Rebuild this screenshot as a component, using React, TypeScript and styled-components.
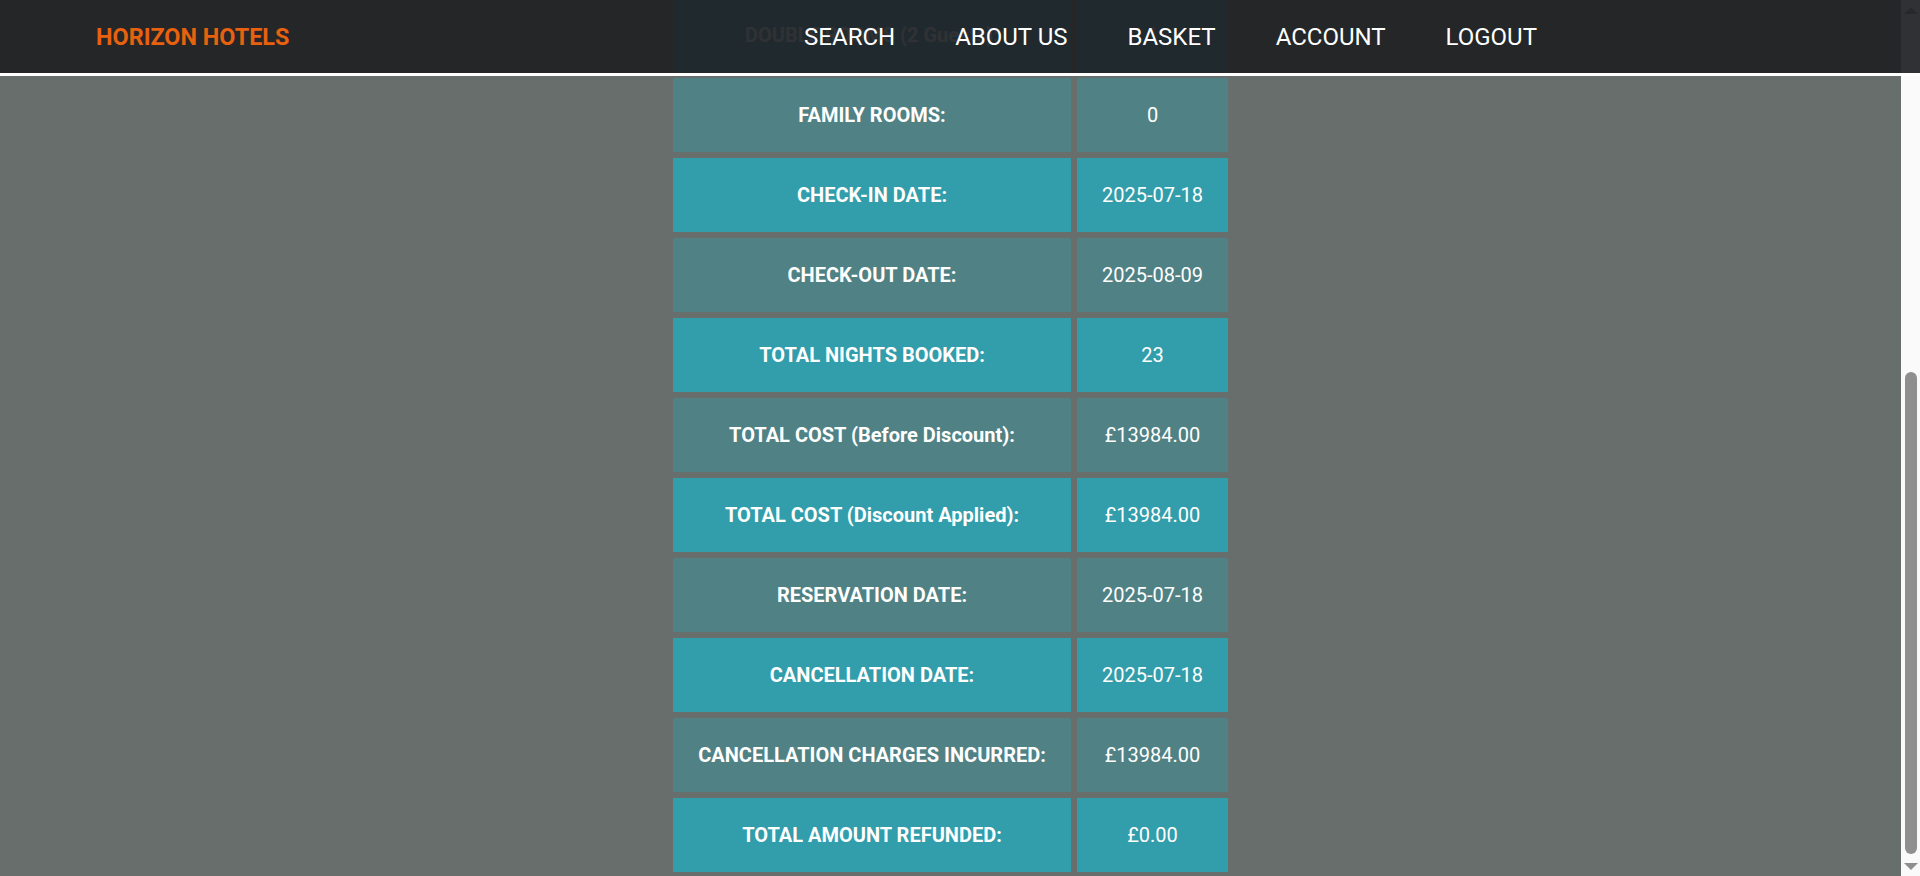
import React, { useLayoutEffect, useRef, useState } from 'react';
import styled, { createGlobalStyle } from 'styled-components';

const GlobalStyle = createGlobalStyle`
  html, body {
    margin: 0;
    padding: 0;
    height: 100%;
    overflow: hidden;
  }
  body {
    font-family: Roboto, 'Liberation Sans', sans-serif;
    background: #676e6b;
  }
`;

type Detail = { label: string; value: string };

// booking summary shown after a cancellation
const details: Detail[] = [
  { label: 'BOOKING ID:', value: '10482' },
  { label: 'HOTEL:', value: 'London' },
  { label: 'GUEST NAME:', value: 'J. Smith' },
  { label: 'BOOKING STATUS:', value: 'Cancelled' },
  { label: 'PAYMENT METHOD:', value: 'Card' },
  { label: 'STANDARD ROOMS (1 Guest):', value: '0' },
  { label: 'DOUBLE ROOMS (2 Guests):', value: '1' },
  { label: 'FAMILY ROOMS:', value: '0' },
  { label: 'CHECK-IN DATE:', value: '2025-07-18' },
  { label: 'CHECK-OUT DATE:', value: '2025-08-09' },
  { label: 'TOTAL NIGHTS BOOKED:', value: '23' },
  { label: 'TOTAL COST (Before Discount):', value: '£13984.00' },
  { label: 'TOTAL COST (Discount Applied):', value: '£13984.00' },
  { label: 'RESERVATION DATE:', value: '2025-07-18' },
  { label: 'CANCELLATION DATE:', value: '2025-07-18' },
  { label: 'CANCELLATION CHARGES INCURRED:', value: '£13984.00' },
  { label: 'TOTAL AMOUNT REFUNDED:', value: '£0.00' },
];

const navItems = ['SEARCH', 'ABOUT US', 'BASKET', 'ACCOUNT', 'LOGOUT'];

const App: React.FC = () => {
  const scrollRef = useRef<HTMLDivElement>(null);
  const laneRef = useRef<HTMLDivElement>(null);
  const [thumb, setThumb] = useState({ height: 0, top: 0 });

  // jump to the end of the summary and keep the drawn scrollbar in sync
  useLayoutEffect(() => {
    const el = scrollRef.current;
    const lane = laneRef.current;
    if (!el || !lane) return;

    const update = () => {
      const max = el.scrollHeight - el.clientHeight;
      const length = lane.clientHeight - 3;
      const height = (length * el.clientHeight) / el.scrollHeight;
      const top = max > 0 ? ((length - height) * el.scrollTop) / max : 0;
      setThumb({ height, top });
    };

    el.scrollTop = el.scrollHeight;
    update();
    el.addEventListener('scroll', update);
    return () => el.removeEventListener('scroll', update);
  }, []);

  return (
    <>
      <GlobalStyle />
      <Page>
        <Header>
          <Logo href="#">HORIZON HOTELS</Logo>
          <Nav>
            {navItems.map((item) => (
              <NavLink key={item} href="#">
                {item}
              </NavLink>
            ))}
          </Nav>
        </Header>

        <ScrollArea ref={scrollRef}>
          <Content>
            <Title>BOOKING CANCELLED</Title>
            <DetailsList>
              {details.map((d, i) => (
                <Row key={d.label}>
                  <Cell $tone={i % 2 === 0 ? 'bright' : 'dark'} $label>
                    {d.label}
                  </Cell>
                  <Cell $tone={i % 2 === 0 ? 'bright' : 'dark'}>{d.value}</Cell>
                </Row>
              ))}
            </DetailsList>
          </Content>
        </ScrollArea>

        <ScrollTrack>
          <ArrowButton $height={17} $pad={7}>
            <Arrow $dir="up" />
          </ArrowButton>
          <ThumbLane ref={laneRef}>
            <Thumb style={{ height: thumb.height, marginTop: thumb.top }} />
          </ThumbLane>
          <ArrowButton $height={19} $pad={6}>
            <Arrow $dir="down" />
          </ArrowButton>
        </ScrollTrack>
      </Page>
    </>
  );
};

const Page = styled.div`
  position: relative;
  display: flex;
  height: 100vh;
  overflow: hidden;
`;

const Header = styled.header`
  position: absolute;
  top: 0;
  left: 0;
  right: 0;
  z-index: 10;
  height: 73px;
  display: flex;
  align-items: center;
  justify-content: space-between;
  padding: 0 383px 0 96px;
  background: rgba(30, 31, 35, 0.92);
  border-bottom: 3px solid #ffffff;
`;

const Logo = styled.a`
  color: #e8610f;
  font-size: 23.4px;
  font-weight: 700;
  text-decoration: none;
`;

const Nav = styled.nav`
  display: flex;
  gap: 60px;
`;

const NavLink = styled.a`
  color: #ffffff;
  font-size: 24px;
  font-weight: 400;
  text-decoration: none;
`;

const ScrollArea = styled.div`
  flex: 1;
  overflow-y: scroll;
  scrollbar-width: none;

  &::-webkit-scrollbar {
    display: none;
  }
`;

const Content = styled.main`
  padding: 76px 0 4px;
`;

const Title = styled.h2`
  margin: 0;
  padding: 24px 0;
  font-size: 28px;
  line-height: 40px;
  font-weight: 700;
  color: #ffffff;
  text-align: center;
`;

const DetailsList = styled.section`
  display: flex;
  flex-direction: column;
  align-items: center;
  gap: 6px;
`;

const Row = styled.div`
  display: grid;
  grid-template-columns: 398px 151px;
  gap: 6px;
`;

const Cell = styled.div<{ $tone: 'bright' | 'dark'; $label?: boolean }>`
  background: ${({ $tone }) => ($tone === 'bright' ? '#329dab' : '#508285')};
  color: #ffffff;
  font-size: 20px;
  line-height: 30px;
  font-weight: ${({ $label }) => ($label ? 700 : 400)};
  padding: 22px 8px;
  text-align: center;
  white-space: nowrap;
`;

const ScrollTrack = styled.div`
  width: 19px;
  flex-shrink: 0;
  display: flex;
  flex-direction: column;
  background: #fafafa;
`;

const ArrowButton = styled.div<{ $height: number; $pad: number }>`
  height: ${({ $height }) => $height}px;
  box-sizing: border-box;
  padding-top: ${({ $pad }) => $pad}px;
  display: flex;
  justify-content: center;
  align-items: flex-start;
`;

const Arrow = styled.div<{ $dir: 'up' | 'down' }>`
  width: 0;
  height: 0;
  border-left: 7px solid transparent;
  border-right: 7px solid transparent;
  ${({ $dir }) =>
    $dir === 'up' ? 'border-bottom: 7px solid #8f8f8f;' : 'border-top: 7px solid #8f8f8f;'}
`;

const ThumbLane = styled.div`
  flex: 1;
  display: flex;
  flex-direction: column;
  padding: 0 3px 3px 4px;
`;

const Thumb = styled.div`
  flex-shrink: 0;
  background: #8f8f8f;
  border-radius: 6px;
`;

export default App;
